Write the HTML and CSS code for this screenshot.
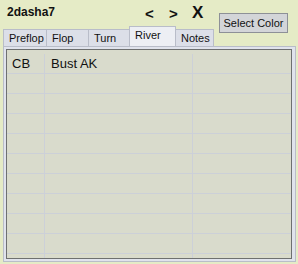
FILE: index.html
```html
<!DOCTYPE html>
<html>
<head>
<meta charset="utf-8">
<link rel="stylesheet" href="styles.css">
</head>
<body>
<div class="window">
  <div class="top">
    <div class="left">
      <div class="titlebar">
        <span class="title">2dasha7</span>
        <div class="nav">
          <span class="arrow">&lt;</span>
          <span class="arrow">&gt;</span>
          <span class="close">X</span>
        </div>
      </div>
      <div class="tabs">
        <div class="tab t-preflop">Preflop</div>
        <div class="tab t-flop">Flop</div>
        <div class="tab t-turn">Turn</div>
        <div class="tab t-river active">River</div>
        <div class="tab t-notes">Notes</div>
      </div>
    </div>
    <button class="select-color">Select Color</button>
  </div>
  <div class="panel">
    <div class="list">
      <div class="row"><div class="c1">CB</div><div class="c2">Bust AK</div><div class="c3"></div></div>
      <div class="row"><div class="c1"></div><div class="c2"></div><div class="c3"></div></div>
      <div class="row"><div class="c1"></div><div class="c2"></div><div class="c3"></div></div>
      <div class="row"><div class="c1"></div><div class="c2"></div><div class="c3"></div></div>
      <div class="row"><div class="c1"></div><div class="c2"></div><div class="c3"></div></div>
      <div class="row"><div class="c1"></div><div class="c2"></div><div class="c3"></div></div>
      <div class="row"><div class="c1"></div><div class="c2"></div><div class="c3"></div></div>
      <div class="row"><div class="c1"></div><div class="c2"></div><div class="c3"></div></div>
      <div class="row"><div class="c1"></div><div class="c2"></div><div class="c3"></div></div>
      <div class="row"><div class="c1"></div><div class="c2"></div><div class="c3"></div></div>
      <div class="row"><div class="c1"></div><div class="c2"></div><div class="c3"></div></div>
    </div>
  </div>
</div>
</body>
</html>
```
FILE: styles.css
```css
* { box-sizing: border-box; }
html, body {
  margin: 0;
  padding: 0;
  width: 298px;
  height: 264px;
  overflow: hidden;
  background: #e5ebc6;
  font-family: "Liberation Sans", Arial, sans-serif;
}
.window {
  display: flex;
  flex-direction: column;
  height: 264px;
}
.top {
  display: flex;
  align-items: flex-start;
  height: 46px;
  flex: none;
}
.left {
  display: flex;
  flex-direction: column;
  width: 216px;
}
.titlebar {
  display: flex;
  align-items: center;
  height: 27px;
  padding-left: 7px;
}
.title {
  font-weight: bold;
  font-size: 12px;
  color: #111;
  width: 138px;
  margin-top: -4px;
}
.nav {
  display: flex;
  align-items: center;
  margin-top: -1px;
}
.arrow {
  font-weight: bold;
  font-size: 15px;
  color: #111;
  width: 24px;
}
.close {
  font-weight: bold;
  font-size: 17px;
  color: #111;
  margin-left: -1px;
}
.tabs {
  display: flex;
  align-items: flex-end;
  height: 19px;
  padding-left: 3px;
}
.tab {
  height: 17px;
  background: #dcdfe8;
  border: 1px solid #b9bdc9;
  border-bottom: none;
  font-size: 11px;
  color: #111;
  padding: 2px 0 0 5px;
  margin-right: -1px;
}
.t-preflop { width: 44px; }
.t-flop { width: 43px; }
.t-turn { width: 42px; }
.t-river { width: 47px; }
.t-notes { width: 39px; }
.tab.active {
  height: 20px;
  background: #edeff4;
  padding-top: 2px;
  position: relative;
  z-index: 1;
}
.select-color {
  margin-top: 13px;
  margin-left: 3px;
  width: 69px;
  height: 20px;
  background: #d3d5d8;
  border: 1px solid #8d9097;
  font-family: "Liberation Sans", Arial, sans-serif;
  font-size: 11px;
  color: #111;
  padding: 0;
}
.panel {
  margin: 0 2px 2px 3px;
  flex: 1;
  min-height: 0;
  background: #e0e3ec;
  border: 1px solid #b9bdc9;
  padding: 2px 3px 2px 2px;
  display: flex;
}
.list {
  flex: 1;
  min-height: 0;
  overflow: hidden;
  background: #d9dbcc;
  border: 1px solid #6e7070;
  padding-top: 4px;
}
.row {
  display: flex;
  height: 20px;
  border-bottom: 1px solid #ccd0d8;
}
.c1, .c2, .c3 {
  font-size: 13px;
  color: #111;
  line-height: 18px;
  padding-top: 1px;
}
.c1 { width: 38px; padding-left: 5px; border-right: 1px solid #ccd0d8; }
.c2 { width: 148px; padding-left: 6px; border-right: 1px solid #ccd0d8; }
.c3 { flex: 1; }
```
